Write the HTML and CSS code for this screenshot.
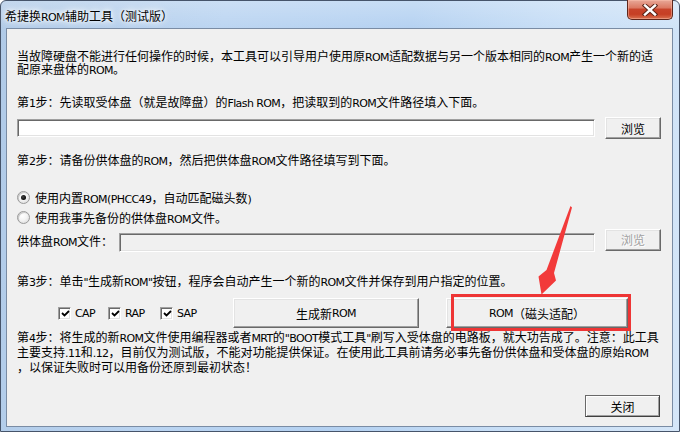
FILE: index.html
```html
<!DOCTYPE html>
<html lang="zh-CN">
<head>
<meta charset="utf-8">
<title>希捷换ROM辅助工具（测试版）</title>
<link rel="stylesheet" href="styles.css">
</head>
<body>
<div class="window">
  <div class="titlebar">
    <span class="title">希捷换<span class="lat">ROM</span>辅助工具（测试版）</span>
    <div class="close-btn">
      <svg width="16" height="12" viewBox="0 0 16 12">
        <path d="M3 1.5 L13 10.5 M13 1.5 L3 10.5" stroke="#5a2418" stroke-width="4.4" stroke-linecap="square"/>
        <path d="M3 1.5 L13 10.5 M13 1.5 L3 10.5" stroke="#ffffff" stroke-width="2.4" stroke-linecap="square"/>
      </svg>
    </div>
  </div>
  <div class="frame">
    <div class="client">
      <p class="text intro">当故障硬盘不能进行任何操作的时候，本工具可以引导用户使用原<span class="lat">ROM</span>适配数据与另一个版本相同的<span class="lat">ROM</span>产生一个新的适<br>配原来盘体的<span class="lat">ROM</span>。</p>
      <p class="text step s1">第<span class="lat">1</span>步：先读取受体盘（就是故障盘）的<span class="lat">Flash ROM</span>，把读取到的<span class="lat">ROM</span>文件路径填入下面。</p>
      <div class="file-row r1">
        <div class="input wide"></div>
        <button class="btn browse">浏览</button>
      </div>
      <p class="text step s2">第<span class="lat">2</span>步：请备份供体盘的<span class="lat">ROM</span>，然后把供体盘<span class="lat">ROM</span>文件路径填写到下面。</p>
      <div class="radio-row first"><span class="radio on"></span><span>使用内置<span class="lat">ROM(PHCC49</span>，自动匹配磁头数<span class="lat">)</span></span></div>
      <div class="radio-row"><span class="radio"></span><span>使用我事先备份的供体盘<span class="lat">ROM</span>文件。</span></div>
      <div class="file-row r2">
        <span class="field-label">供体盘<span class="lat">ROM</span>文件：</span>
        <div class="input narrow disabled"></div>
        <button class="btn browse" disabled>浏览</button>
      </div>
      <p class="text step s3">第<span class="lat">3</span>步：单击<span class="lat">"</span>生成新<span class="lat">ROM"</span>按钮，程序会自动产生一个新的<span class="lat">ROM</span>文件并保存到用户指定的位置。</p>
      <div class="action-row">
        <div class="checks">
          <label class="chk c1"><span class="box"><svg width="9" height="9" viewBox="0 0 9 9"><path d="M1 4 L3.5 6.5 L8 2" fill="none" stroke="#000" stroke-width="1.8"/></svg></span><span class="lat">CAP</span></label>
          <label class="chk c2"><span class="box"><svg width="9" height="9" viewBox="0 0 9 9"><path d="M1 4 L3.5 6.5 L8 2" fill="none" stroke="#000" stroke-width="1.8"/></svg></span><span class="lat">RAP</span></label>
          <label class="chk c3"><span class="box"><svg width="9" height="9" viewBox="0 0 9 9"><path d="M1 4 L3.5 6.5 L8 2" fill="none" stroke="#000" stroke-width="1.8"/></svg></span><span class="lat">SAP</span></label>
        </div>
        <button class="btn big">生成新<span class="lat">ROM</span></button>
        <div class="annotated">
          <button class="btn big rom"><span class="lat">ROM</span>（磁头适配）</button>
          <span class="red-box"></span>
        </div>
      </div>
      <p class="text step4">第<span class="lat">4</span>步：将生成的新<span class="lat">ROM</span>文件使用编程器或者<span class="lat">MRT</span>的<span class="lat">"BOOT</span>模式工具<span class="lat">"</span>刷写入受体盘的电路板，就大功告成了。注意：此工具<br>主要支持<span class="lat">.11</span>和<span class="lat">.12</span>，目前仅为测试版，不能对功能提供保证。在使用此工具前请务必事先备份供体盘和受体盘的原始<span class="lat">ROM</span><br>，以保证失败时可以用备份还原到最初状态！</p>
      <div class="footer">
        <button class="btn default">关闭</button>
      </div>
    </div>
  </div>
  <svg class="arrow" width="680" height="432" viewBox="0 0 680 432">
    <polygon points="570.5,206 572,207.5 554,273 556,280.5 541.5,294.5 538.5,276.5 546.5,270" fill="#f23a3a"/>
  </svg>
</div>
</body>
</html>
```

FILE: styles.css
```css
* { box-sizing: border-box; }
html, body { margin: 0; padding: 0; }
body {
  width: 680px;
  height: 432px;
  overflow: hidden;
  background: #ffffff;
  font-family: "Liberation Sans", "Noto Sans CJK SC", sans-serif;
  font-size: 12px;
  color: #000;
}
.lat { font-family: "DejaVu Sans", "Liberation Sans", sans-serif; font-size: 11px; letter-spacing: -0.6px; }
.window {
  position: relative;
  width: 680px;
  height: 432px;
  display: flex;
  flex-direction: column;
  border: 1px solid #46546a;
  border-radius: 6px 6px 0 0;
  background:
    linear-gradient(to bottom, rgba(255,255,255,0.25), rgba(255,255,255,0) 30px),
    linear-gradient(100deg, #b0cae7 0%, #bad4f1 30%, #b4d1f1 55%, #c7def6 75%, #d5e6f8 100%);
}
.titlebar {
  height: 27px;
  flex: none;
  display: flex;
  align-items: center;
  padding-left: 4px;
}
.title {
  font-size: 12px;
  color: #000;
  margin-top: 1px;
  text-shadow: 0 0 6px #fff, 0 0 10px #fff, 0 0 3px #f4f9ff;
  white-space: nowrap;
}
.close-btn {
  margin-left: auto;
  margin-right: 6px;
  align-self: flex-start;
  margin-top: -1px;
  width: 46px;
  height: 20px;
  border: 1px solid #5e261b;
  border-top: none;
  border-radius: 0 0 5px 5px;
  background: linear-gradient(to bottom, #e8a898 0%, #dc7a64 40%, #c8432a 50%, #c63f24 75%, #d9704f 100%);
  box-shadow: inset 0 0 0 1px rgba(255,200,180,0.45);
  display: flex;
  align-items: center;
  justify-content: center;
}
.close-btn svg { display: block; }
.frame {
  flex: 1;
  padding: 0 6px 4px 5px;
  display: flex;
}
.client {
  flex: 1;
  background: #f0f0f0;
  border: 1px solid #7a8ca4;
  padding: 22px 11px 0 10px;
  display: flex;
  flex-direction: column;
}
.text {
  margin: 0;
  line-height: 13.5px;
  white-space: nowrap;
}
.intro { margin-top: -0.5px; }
.s1 { margin-top: 19.5px; }
.s2 { margin-top: 16px; }
.s3 { margin-top: 24px; }
.step4 { margin-top: 3px; line-height: 14px; }

.file-row {
  display: flex;
  align-items: flex-start;
  gap: 10px;
}
.r1 { margin-top: 6.5px; height: 22px; }
.r2 { margin-top: 1px; height: 23px; gap: 0; }
.r2 .btn { margin-left: 10px; height: 23px; }

.input {
  background: #fff;
  border-style: solid;
  border-width: 1px;
  border-color: #a0a0a0 #ffffff #ffffff #a0a0a0;
  box-shadow: inset 1px 1px 0 #696969, inset -1px -1px 0 #e3e3e3;
}
.input.wide { width: 578px; height: 18px; margin-top: 2px; }
.input.narrow { width: 476px; height: 19px; margin-top: 4px; }
.input.disabled { background: #f0f0f0; }
.field-label {
  width: 102px;
  margin-top: 4px;
  line-height: 19px;
  white-space: nowrap;
}

.btn {
  font-family: inherit;
  font-size: 12px;
  color: #000;
  background: #f0f0f0;
  border-style: solid;
  border-width: 1px;
  border-color: #ffffff #696969 #696969 #ffffff;
  box-shadow: inset -1px -1px 0 #a0a0a0, inset 1px 1px 0 #e3e3e3;
  padding: 0;
  margin: 0;
  display: flex;
  align-items: center;
  justify-content: center;
  white-space: nowrap;
}
.btn.browse { width: 56px; height: 22px; }
.btn:disabled {
  color: #a0a0a0;
  text-shadow: 1px 1px 0 #ffffff;
}

.radio-row {
  height: 20px;
  display: flex;
  align-items: center;
  gap: 5px;
  white-space: nowrap;
}
.radio-row.first { margin-top: 19px; }
.radio {
  width: 13px;
  height: 13px;
  border-radius: 50%;
  border: 1px solid #9a9a9a;
  background: radial-gradient(circle at 40% 35%, #ffffff 0%, #f4f4f4 45%, #d4d4d4 100%);
  box-shadow: inset 1px 1px 0 rgba(120,120,120,0.35);
  display: flex;
  align-items: center;
  justify-content: center;
  flex: none;
}
.radio.on::after {
  content: "";
  width: 5px;
  height: 5px;
  border-radius: 50%;
  background: radial-gradient(circle at 40% 40%, #444 0%, #000 80%);
}

.action-row {
  margin-top: 9px;
  height: 30px;
  display: flex;
  align-items: stretch;
}
.checks {
  display: flex;
  align-items: center;
  padding-left: 41px;
}
.chk {
  display: flex;
  align-items: center;
  gap: 4px;
  white-space: nowrap;
}
.chk.c1 { width: 50px; }
.chk.c2 { width: 52px; }
.chk.c3 { width: 73px; }
.box {
  width: 13px;
  height: 13px;
  flex: none;
  background: #fff;
  border-style: solid;
  border-width: 1px;
  border-color: #a0a0a0 #ffffff #ffffff #a0a0a0;
  box-shadow: inset 1px 1px 0 #696969, inset -1px -1px 0 #e3e3e3;
  display: flex;
  align-items: center;
  justify-content: center;
}
.box svg { display: block; margin-left: 1px; margin-top: 1px; }
.btn.big { width: 186px; height: 30px; }
.annotated {
  position: relative;
  margin-left: 27px;
}
.btn.rom { width: 182px; }
.red-box {
  position: absolute;
  left: 5px;
  top: -4px;
  width: 180px;
  height: 37px;
  border: 3px solid #ee3535;
}

.footer {
  margin-top: 20px;
  display: flex;
  justify-content: flex-end;
  padding-right: 1px;
}
.btn.default {
  width: 75px;
  height: 22px;
  border-color: #696969 #404040 #404040 #696969;
  box-shadow: inset 1px 1px 0 #ffffff, inset -1px -1px 0 #a0a0a0, inset 2px 2px 0 #f0f0f0;
}

.arrow {
  position: absolute;
  left: -1px;
  top: -1px;
  pointer-events: none;
}
```
